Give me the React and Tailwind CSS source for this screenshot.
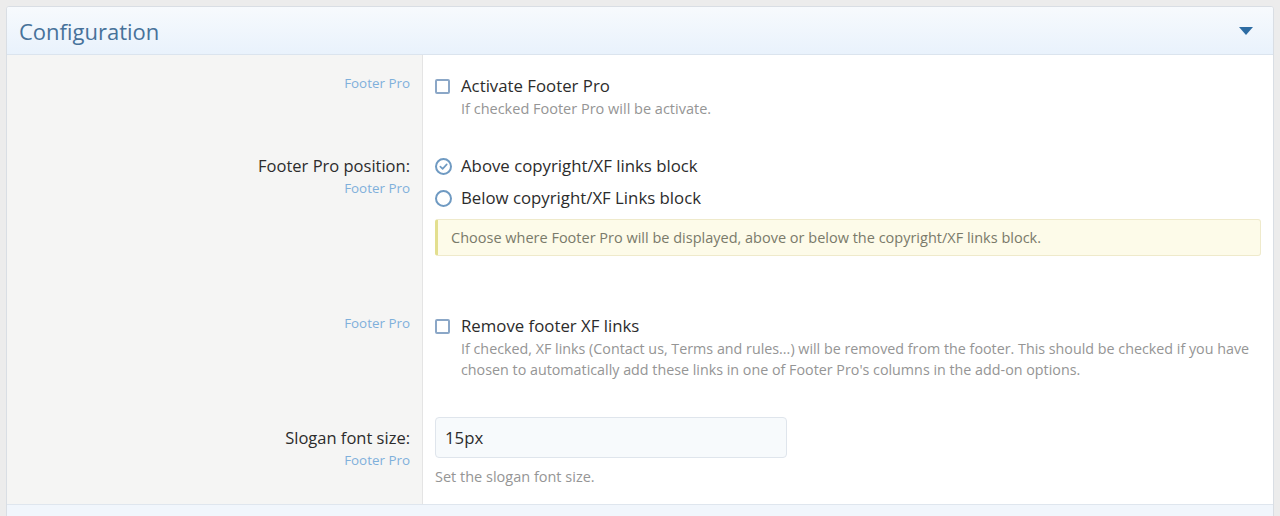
const font = { fontFamily: '"Open Sans", "Noto Sans", Arial, sans-serif' };

function Checkbox() {
  return (
    <span className="mt-[5px] h-[15px] w-[15px] shrink-0 rounded-[2px] border-2 border-[#8ba7c7] bg-white" />
  );
}

function Radio({ checked }) {
  return (
    <span className="mt-[4px] flex h-[17px] w-[17px] shrink-0 items-center justify-center rounded-full border-2 border-[#6f9ac2] bg-white">
      {checked && (
        <svg width="9" height="9" viewBox="0 0 10 10" fill="none">
          <path d="M1.5 5.2 L4 7.6 L8.6 2.6" stroke="#6f9ac2" strokeWidth="1.8" strokeLinecap="round" strokeLinejoin="round" />
        </svg>
      )}
    </span>
  );
}

function Row({ left, right, leftPt, rightPt, height }) {
  return (
    <div className="flex" style={{ height }}>
      <div className="w-[416px] shrink-0 border-r border-[#e4e4e4] bg-[#f5f5f4] pr-3 text-right" style={{ paddingTop: leftPt }}>
        {left}
      </div>
      <div className="flex-1 pl-[12px] pr-3" style={{ paddingTop: rightPt }}>
        {right}
      </div>
    </div>
  );
}

const Src = ({ className = "" }) => (
  <div className={"text-[13.4px] leading-[18px] text-[#7fb0db] " + className}>Footer Pro</div>
);

export default function App() {
  return (
    <div className="h-[516px] overflow-hidden bg-[#ececec] px-[6px] pt-[6px]" style={font}>
      <div className="overflow-hidden rounded-t-[3px] border border-[#d9dee4] bg-white">
        <div className="flex h-[48px] items-center justify-between border-b border-[#dbe4ee] bg-gradient-to-b from-[#f7fafd] to-[#e9f2fc] pl-[12px] pr-[20px]">
          <h2 className="pt-[1px] text-[22px] font-normal text-[#47729a]">Configuration</h2>
          <svg width="14" height="8" viewBox="0 0 14 8">
            <path d="M0 0 H14 L7 8 Z" fill="#2d6ca3" />
          </svg>
        </div>

        <Row
          height={87}
          leftPt={19}
          rightPt={19}
          left={<Src />}
          right={
            <div>
              <div className="flex gap-[11px]">
                <Checkbox />
                <span className="text-[16.8px] leading-[24px] text-[#2c2c2c]">Activate Footer Pro</span>
              </div>
              <div className="pl-[26px] text-[14.5px] leading-[22px] text-[#959595]">If checked Footer Pro will be activate.</div>
            </div>
          }
        />

        <Row
          height={138}
          leftPt={13}
          rightPt={12}
          left={
            <div>
              <div className="text-[16.5px] leading-[22px] text-[#2c2c2c]">Footer Pro position:</div>
              <Src className="mt-[2px]" />
            </div>
          }
          right={
            <div>
              <div className="flex gap-[9px]">
                <Radio checked />
                <span className="text-[16.8px] leading-[24px] text-[#2c2c2c]">Above copyright/XF links block</span>
              </div>
              <div className="mt-[8px] flex gap-[9px]">
                <Radio />
                <span className="text-[16.8px] leading-[24px] text-[#2c2c2c]">Below copyright/XF Links block</span>
              </div>
              <div className="mt-[9px] flex h-[37px] items-center rounded-[3px] border border-l-[3px] border-[#efeacb] border-l-[#e3df8f] bg-[#fdfbe9] pl-[13px] text-[14.5px] text-[#7a7a6a]">
                Choose where Footer Pro will be displayed, above or below the copyright/XF links block.
              </div>
            </div>
          }
        />

        <Row
          height={120}
          leftPt={34}
          rightPt={34}
          left={<Src />}
          right={
            <div>
              <div className="flex gap-[11px]">
                <Checkbox />
                <span className="text-[16.8px] leading-[24px] text-[#2c2c2c]">Remove footer XF links</span>
              </div>
              <div className="pl-[26px] text-[14.3px] leading-[21px] text-[#959595]">
                If checked, XF links (Contact us, Terms and rules...) will be removed from the footer. This should be checked if you have chosen to automatically add these links in one of Footer Pro's columns in the add-on options.
              </div>
            </div>
          }
        />

        <Row
          height={104}
          leftPt={27}
          rightPt={17}
          left={
            <div>
              <div className="text-[16.5px] leading-[22px] text-[#2c2c2c]">Slogan font size:</div>
              <Src className="mt-[2px]" />
            </div>
          }
          right={
            <div>
              <div className="flex h-[41px] w-[352px] items-center rounded-[4px] border border-[#dfe5ec] bg-[#f7fafc] pl-[9px] text-[16.8px] text-[#2c2c2c]">
                15px
              </div>
              <div className="mt-[9px] text-[14.5px] leading-[20px] text-[#959595]">Set the slogan font size.</div>
            </div>
          }
        />

        <div className="h-[20px] border-t border-[#dfe6ee] bg-[#f1f6fc]" />
      </div>
    </div>
  );
}
